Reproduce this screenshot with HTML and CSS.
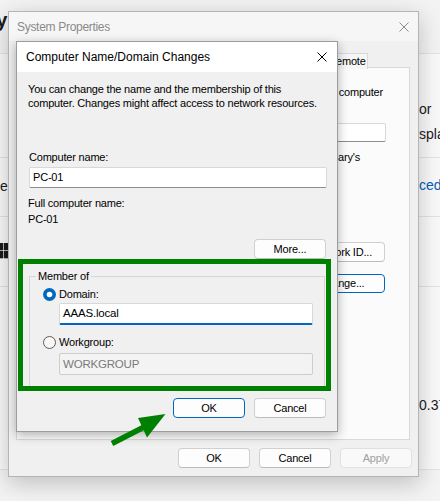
FILE: index.html
```html
<!DOCTYPE html>
<html>
<head>
<meta charset="utf-8">
<link rel="stylesheet" href="styles.css">
</head>
<body>
<div class="desk">
  <div class="settings">
    <div class="s-head"><span class="s-title">Sys</span></div>
    <div class="s-card c1">
      <div class="s-left"></div>
      <div class="s-right"><span>or</span><span>spla</span></div>
    </div>
    <div class="s-card c2">
      <div class="s-left"><span class="s-lt">el</span></div>
      <div class="s-right"><span class="link">ced</span></div>
    </div>
    <div class="s-card c3">
      <div class="s-left">
        <svg class="winlogo" width="16" height="16" viewBox="0 0 16 16"><rect x="0" y="0" width="7.3" height="7.3" fill="#1b1b1b"/><rect x="8" y="0" width="7.3" height="7.3" fill="#1b1b1b"/><rect x="0" y="8" width="7.3" height="7.3" fill="#1b1b1b"/><rect x="8" y="8" width="7.3" height="7.3" fill="#1b1b1b"/></svg>
      </div>
      <div class="s-right"></div>
    </div>
    <div class="s-card c4">
      <div class="s-left"></div>
      <div class="s-right"><span>0.37</span></div>
    </div>
  </div>

  <div class="win sp">
    <div class="sp-title">
      <span>System Properties</span>
      <svg class="xicon" width="10" height="10" viewBox="0 0 10 10"><path d="M0.5 0.5 L9.5 9.5 M9.5 0.5 L0.5 9.5" stroke="#8c8c8c" stroke-width="1"/></svg>
    </div>
    <div class="sp-body">
      <div class="tabs">
        <span class="tab t1"></span>
        <span class="tab t2"></span>
        <span class="tab t3"></span>
        <span class="tab t4"></span>
        <span class="tab t5">Remote</span>
      </div>
      <div class="panel">
        <p class="pline pl1">computer</p>
        <div class="tb tb-desc"></div>
        <p class="pline pl2">Mary's</p>
        <button class="btn b-net">Network ID...</button>
        <button class="btn b-chg">Change...</button>
      </div>
      <div class="btnrow sp-btns">
        <button class="btn">OK</button>
        <button class="btn">Cancel</button>
        <button class="btn dis">Apply</button>
      </div>
    </div>
  </div>

  <div class="win dlg">
    <div class="dlg-title">
      <span>Computer Name/Domain Changes</span>
      <svg class="xicon" width="10" height="10" viewBox="0 0 10 10"><path d="M0.5 0.5 L9.5 9.5 M9.5 0.5 L0.5 9.5" stroke="#000" stroke-width="1"/></svg>
    </div>
    <div class="dlg-body">
      <p class="desc">You can change the name and the membership of this<br>computer. Changes might affect access to network resources.</p>
      <div class="lbl l-cn">Computer name:</div>
      <div class="tb tb-cn">PC-01</div>
      <div class="lbl l-full">Full computer name:</div>
      <div class="lbl l-pc">PC-01</div>
      <div class="btnrow more-row"><button class="btn">More...</button></div>
      <fieldset class="grp">
        <legend>Member of</legend>
        <div class="radio r-dom">
          <svg width="13" height="13" viewBox="0 0 13 13"><circle cx="6.5" cy="6.5" r="6.5" fill="#0067c0"/><circle cx="6.5" cy="6.5" r="2.8" fill="#fff"/></svg>
          <span>Domain:</span>
        </div>
        <div class="tb tb-dom">AAAS.local</div>
        <div class="radio r-wg">
          <svg width="13" height="13" viewBox="0 0 13 13"><circle cx="6.5" cy="6.5" r="6" fill="#f7f7f7" stroke="#5a5a5a" stroke-width="1"/></svg>
          <span>Workgroup:</span>
        </div>
        <div class="tb tb-wg">WORKGROUP</div>
      </fieldset>
      <div class="btnrow dlg-btns">
        <button class="btn def">OK</button>
        <button class="btn">Cancel</button>
      </div>
    </div>
    <div class="highlight"></div>
  </div>

  <svg class="arrow" width="75" height="45" viewBox="0 0 75 45">
    <line x1="12" y1="38.5" x2="46" y2="21" stroke="#008000" stroke-width="5.5"/>
    <polygon points="65.5,9 38,13 47,32.5" fill="#008000"/>
  </svg>
</div>
</body>
</html>
```

FILE: styles.css
```css
* { box-sizing: border-box; }
html, body { margin: 0; padding: 0; }
body {
  font-family: "Liberation Sans", Arial, sans-serif;
  background: #f3f3f3;
}
.desk {
  position: relative;
  width: 440px;
  height: 501px;
  overflow: hidden;
  background: #f3f3f3;
  font-size: 11px;
  letter-spacing: -0.2px;
  color: #000;
}

/* settings app behind */
.settings { display: flex; flex-direction: column; }
.s-head { height: 53px; padding-top: 8px; }
.s-title {
  display: block;
  margin-left: -17px;
  font-size: 20px;
  font-weight: bold;
  letter-spacing: 0;
  line-height: 24px;
  color: #1b1b1b;
}
.s-card {
  display: flex;
  background: #f9f9f9;
  border-top: 1px solid #e3e3e3;
  font-size: 14px;
  letter-spacing: 0;
  color: #1b1b1b;
}
.c1 { height: 104px; }
.c2 { height: 59px; align-items: center; }
.c3 { height: 70px; align-items: center; }
.c4 { height: 184px; border-bottom: 1px solid #e3e3e3; }
.s-left {
  width: 11px;
  display: flex;
  justify-content: flex-end;
  white-space: nowrap;
}
.s-lt { margin-top: -3px; }
.s-right {
  margin-left: auto;
  width: 21px;
  overflow: hidden;
  white-space: nowrap;
  display: flex;
  flex-direction: column;
}
.c1 .s-right { padding-top: 43px; line-height: 25px; }
.c2 .s-right { margin-top: -5px; }
.c4 .s-right { padding-top: 108px; line-height: 20px; }
.link { color: #005fb8; }
.winlogo { flex: none; margin-top: -2px; }
.c3 .s-left { justify-content: flex-start; }
.c3 .winlogo { margin-left: -4px; }

/* windows */
.win {
  position: absolute;
  display: flex;
  flex-direction: column;
}
.xicon { flex: none; }

.sp {
  z-index: 1;
  left: 8px;
  top: 11px;
  width: 411px;
  height: 466px;
  border: 1px solid #b5b5b5;
  background: #f0f0f0;
  box-shadow: 0 6px 22px rgba(0, 0, 0, 0.22);
}
.sp-title {
  height: 29px;
  background: #f6f6f6;
  display: flex;
  align-items: center;
  justify-content: space-between;
  padding: 0 9px 0 8px;
  font-size: 12px;
  letter-spacing: -0.3px;
  color: #8a8a8a;
}
.sp-body {
  flex: 1;
  display: flex;
  flex-direction: column;
  padding: 12px 7px 8px 7px;
}
.tabs {
  display: flex;
  height: 15px;
  margin-bottom: -1px;
  position: relative;
}
.tab {
  height: 16px;
  line-height: 14px;
  text-align: center;
  background: #f6f6f6;
  border: 1px solid #d9d9d9;
  border-bottom: none;
  margin-right: -1px;
  white-space: nowrap;
  overflow: hidden;
}
.t1 { width: 88px; }
.t2 { width: 60px; }
.t3 { width: 62px; }
.t4 { width: 104px; }
.t5 { width: 42px; }
.panel {
  flex: 1;
  margin-right: 1px;
  background: #fbfbfb;
  border: 1px solid #d9d9d9;
  display: flex;
  flex-direction: column;
  padding-right: 23px;
}
.pline {
  margin: 0;
  line-height: 14px;
  text-align: right;
  white-space: nowrap;
}
.pl1 { margin-top: 17px; margin-right: 3px; }
.pl2 { margin-top: 8px; margin-right: 26px; }
.tb-desc { margin-top: 24px; height: 19px; }

.btnrow {
  display: flex;
  justify-content: flex-end;
  gap: 9px;
}
.sp-btns { margin-top: 8px; margin-right: -1px; }

.btn {
  font: inherit;
  letter-spacing: inherit;
  color: #000;
  width: 72px;
  height: 20px;
  padding: 0;
  line-height: 18px;
  text-align: center;
  background: #fdfdfd;
  border: 1px solid #d0d0d0;
  border-bottom-color: #bcbcbc;
  border-radius: 4px;
  white-space: nowrap;
}
.btn.dis { color: #a0a0a0; border-color: #e0e0e0; background: #f9f9f9; }
.btn.def { border-color: #0067c0; }
.btn.b-net { margin-top: 78px; align-self: flex-end; width: 87px; margin-right: 1px; }
.btn.b-chg { margin-top: 12px; align-self: flex-end; width: 87px; margin-right: 1px; height: 19px; line-height: 17px; border-color: #0067c0; }

.tb {
  background: #fff;
  border: 1px solid #d8d8d8;
  border-bottom-color: #8d8d8d;
  border-radius: 2px;
  padding-left: 3px;
  white-space: nowrap;
}

/* dialog */
.dlg {
  z-index: 2;
  left: 16px;
  top: 41px;
  width: 322px;
  border: 1px solid #9c9c9c;
  background: #f0f0f0;
  box-shadow: 0 3px 10px rgba(0, 0, 0, 0.3);
}
.dlg-title {
  height: 30px;
  background: #fff;
  display: flex;
  align-items: center;
  justify-content: space-between;
  padding: 0 10px 0 9px;
  font-size: 12px;
  letter-spacing: 0;
}
.dlg-body {
  display: flex;
  flex-direction: column;
  padding: 10px 10px 13px 11px;
}
.desc { margin: 0; line-height: 14px; }
.lbl { line-height: 14px; }
.l-cn { margin-top: 40px; padding-left: 1px; }
.tb-cn { margin-top: 3px; margin-left: 1px; height: 21px; line-height: 19px; }
.l-full { margin-top: 8px; }
.l-pc { margin-top: 2px; }
.more-row { margin-top: 13px; margin-right: 1px; }

.grp {
  margin: 10px 2px 0 1px;
  padding: 0 0 13px 0;
  border: 1px solid #d5d5d5;
  min-width: 0;
}
.grp legend {
  margin-left: 6px;
  padding: 0 2px;
  line-height: 14px;
}
.radio {
  display: flex;
  align-items: center;
  height: 14px;
  padding-left: 13px;
  gap: 3px;
}
.radio svg { flex: none; }
.r-dom { margin-top: 4px; }
.r-wg { margin-top: 10px; }
.tb-dom {
  margin: 2px 0 0 29px;
  width: 254px;
  height: 22px;
  line-height: 19px;
  border-bottom: 2px solid #0067c0;
  font-size: 11.5px;
}
.tb-wg {
  margin: 4px 0 0 29px;
  width: 254px;
  height: 22px;
  line-height: 20px;
  background: #f3f3f3;
  border-color: #cdcdcd;
  color: #7a7a7a;
  font-size: 11.5px;
}
.dlg-btns { margin-top: 9px; margin-right: 1px; }

.highlight {
  position: absolute;
  left: 1px;
  top: 217px;
  width: 313px;
  height: 132px;
  border: 5px solid #008000;
}

.arrow {
  position: absolute;
  z-index: 3;
  left: 100px;
  top: 405px;
}
```
